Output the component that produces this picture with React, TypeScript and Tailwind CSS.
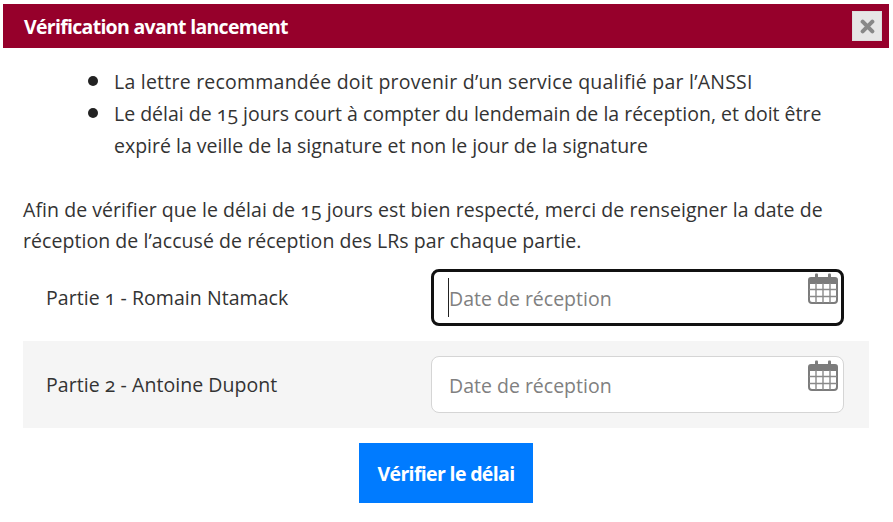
import React from 'react';

const CalendarIcon = () => (
  <svg viewBox="0 0 30 31" className="absolute right-[6px] top-[4px] w-[30px] h-[31px]" fill="none">
    <path d="M0 10V7a3 3 0 0 1 3-3h4V2h3v2h10V2h3v2h4a3 3 0 0 1 3 3v3z" fill="#7c7c7c" />
    <rect x="7" y="0.5" width="3" height="5" rx="1" fill="#7c7c7c" />
    <rect x="20" y="0.5" width="3" height="5" rx="1" fill="#7c7c7c" />
    <path d="M1 10h28v17a3 3 0 0 1-3 3H4a3 3 0 0 1-3-3z" fill="#fff" stroke="#7c7c7c" strokeWidth="2" />
    <path d="M8 10v20M15 10v20M22 10v20M1 16.5h28M1 23.5h28" stroke="#8a8a8a" strokeWidth="1.4" />
  </svg>
);

const DateInput = ({ focus }: { focus?: boolean }) => (
  <div className="relative w-[413px] h-[57px]">
    <input
      autoFocus={focus}
      placeholder="Date de réception"
      className="w-full h-full bg-white rounded-[8px] border border-[#d5d5d5] pl-[17px] pr-10 pt-[1px] text-[19.5px] text-[#222] placeholder:text-[#808080] focus:outline-none focus:border-[3px] focus:border-[#111] focus:pl-[15px]"
    />
    {focus && <span className="absolute left-[17px] top-[9px] w-px h-[39px] bg-[#222]" />}
    <CalendarIcon />
  </div>
);

const PartyRow = ({ label, shaded, focus }: { label: string; shaded?: boolean; focus?: boolean }) => (
  <div className={`flex items-center justify-between h-[87px] pl-[23px] pr-[25px] ${shaded ? 'bg-[#f5f5f5]' : ''}`}>
    <span className="pt-[1px] tracking-[0.05px]">{label}</span>
    <DateInput focus={focus} />
  </div>
);

const Bullet = ({ children }: { children: React.ReactNode }) => (
  <li className="flex gap-[16px]">
    <span className="w-[10px] h-[10px] mt-[10px] rounded-full bg-[#222] shrink-0" />
    <span>{children}</span>
  </li>
);

export default function App() {
  return (
    <div className="w-[893px] h-[522px] bg-white pt-[4px] pl-[3px] pr-[4px] text-[#333] text-[19.5px] leading-[32px] oldstyle-nums font-['Open_Sans','Noto_Sans',sans-serif] overflow-hidden">
      {/* Header */}
      <div className="flex items-center justify-between h-[44px] bg-[#96002b] pl-[21px] pr-[7px]">
        <h1 className="text-white text-[19.5px] font-bold tracking-[-0.71px] pt-[1px]">Vérification avant lancement</h1>
        <button className="flex items-center justify-center w-[30px] h-[30px] bg-[#e6e6e6] border border-[#ddd]">
          <svg viewBox="0 0 14 14" className="w-[15px] h-[15px]">
            <path d="M2.5 2.5l9 9M11.5 2.5l-9 9" stroke="#888" strokeWidth="3.8" strokeLinecap="round" />
          </svg>
        </button>
      </div>

      {/* Body */}
      <div className="px-[20px]">
        <ul className="pl-[65px] pt-[18px] pr-[20px]">
          <Bullet><span className="tracking-[0.23px]">La lettre recommandée doit provenir d’un service qualifié par l’ANSSI</span></Bullet>
          <Bullet>Le délai de 15 jours court à compter du lendemain de la réception, et doit être expiré la veille de la signature et non le jour de la signature</Bullet>
        </ul>
        <p className="mt-[32px] -mb-[2px] leading-[31px] tracking-[0.06px]">
          Afin de vérifier que le délai de 15 jours est bien respecté, merci de renseigner la date de réception de l’accusé de réception des LRs par chaque partie.
        </p>
        <PartyRow label="Partie 1 - Romain Ntamack" focus />
        <PartyRow label="Partie 2 - Antoine Dupont" shaded />
        <div className="flex justify-center mt-[15px]">
          <button className="w-[174px] h-[60px] pt-[1px] bg-[#007bff] text-white text-[19.5px] font-bold tracking-[-0.65px]">Vérifier le délai</button>
        </div>
      </div>
    </div>
  );
}
